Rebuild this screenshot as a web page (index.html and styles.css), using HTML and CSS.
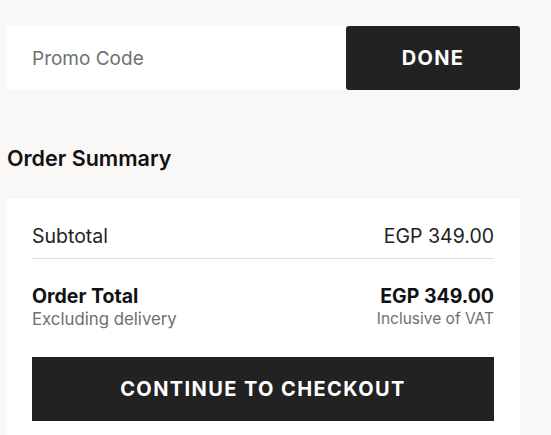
FILE: index.html
```html
<!DOCTYPE html>
<html>
<head>
<meta charset="utf-8">
<link rel="stylesheet" href="styles.css">
</head>
<body>
<div class="page">
  <div class="promo">
    <div class="promo-input">Promo Code</div>
    <div class="done">DONE</div>
  </div>
  <h2 class="title">Order Summary</h2>
  <div class="card">
    <div class="row subtotal">
      <span>Subtotal</span>
      <span>EGP 349.00</span>
    </div>
    <div class="total">
      <div class="total-col">
        <span class="strong">Order Total</span>
        <span class="note">Excluding delivery</span>
      </div>
      <div class="total-col right">
        <span class="strong">EGP 349.00</span>
        <span class="note small">Inclusive of VAT</span>
      </div>
    </div>
    <div class="checkout">CONTINUE TO CHECKOUT</div>
  </div>
</div>
</body>
</html>
```
FILE: styles.css
```css
html, body {
  margin: 0;
  padding: 0;
  background: #faf8f6;
  font-family: Inter, "Noto Sans", sans-serif;
  color: #222;
}
.page {
  padding: 26px 31px 0 7px;
}
.promo {
  display: flex;
  height: 64px;
}
.promo-input {
  flex: 1;
  background: #fff;
  display: flex;
  align-items: center;
  padding-left: 25px;
  font-size: 19px;
  color: #707070;
}
.done {
  width: 174px;
  background: #222;
  border-radius: 3px;
  color: #fff;
  display: flex;
  align-items: center;
  justify-content: center;
  font-size: 20px;
  font-weight: 700;
  letter-spacing: 1.3px;
}
.title {
  margin: 54px 0 27px;
  font-size: 21.5px;
  line-height: 28px;
  font-weight: 600;
  color: #111;
}
.card {
  background: #fff;
  padding: 0 26px 20px 25px;
}
.row {
  display: flex;
  justify-content: space-between;
}
.subtotal {
  padding-top: 24px;
  padding-bottom: 9px;
  line-height: 26px;
  font-size: 19.5px;
  border-bottom: 1px solid #dcdcdc;
}
.total {
  display: flex;
  justify-content: space-between;
  padding-top: 25px;
}
.total-col {
  display: flex;
  flex-direction: column;
}
.total-col.right {
  align-items: flex-end;
}
.strong {
  font-size: 19.5px;
  font-weight: 700;
  line-height: 24px;
  color: #111;
}
.note {
  font-size: 16.8px;
  line-height: 22px;
  color: #707070;
}
.note.small {
  font-size: 15.5px;
}
.checkout {
  margin-top: 27px;
  height: 64px;
  background: #222;
  color: #fff;
  display: flex;
  align-items: center;
  justify-content: center;
  font-size: 20px;
  font-weight: 700;
  letter-spacing: 1.4px;
}
```
